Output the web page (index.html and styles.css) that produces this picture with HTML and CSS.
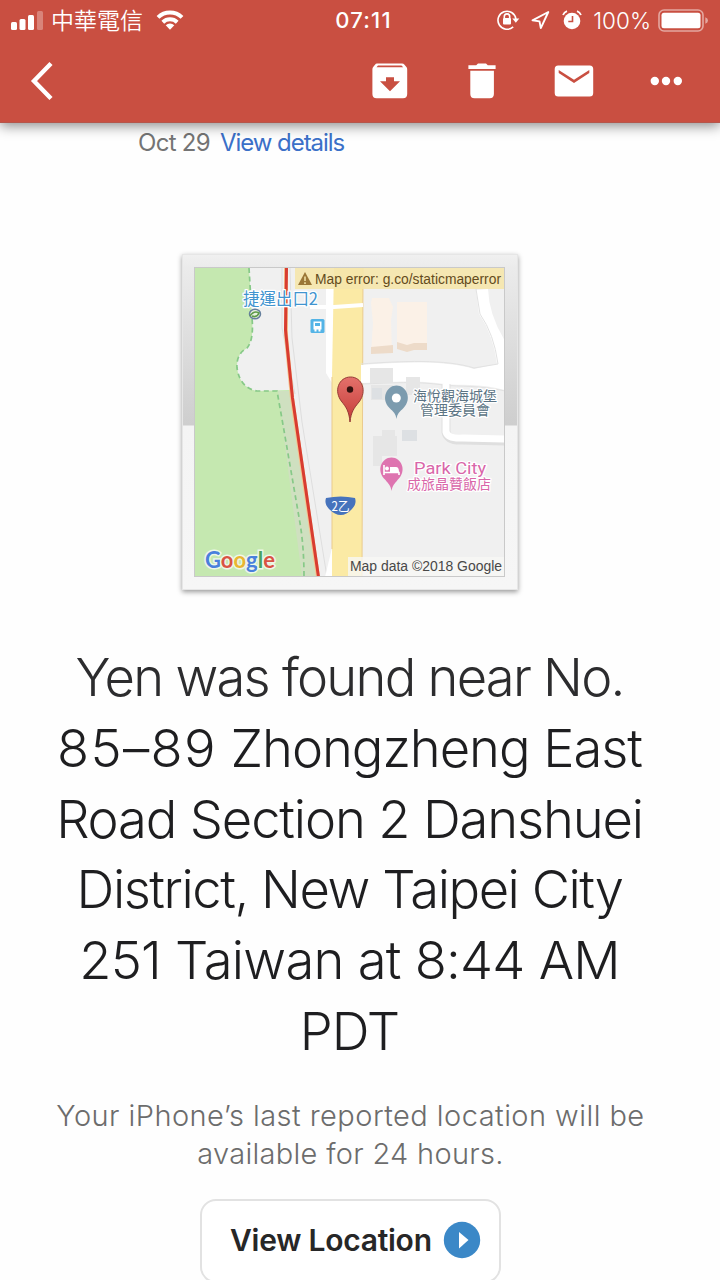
FILE: index.html
```html
<!DOCTYPE html>
<html lang="en">
<head>
    <meta charset="UTF-8">
    <title>Yen was found</title>
    <link rel="stylesheet" href="styles.css">
</head>
<body>
<header class="header">
    <div class="status">
        <div class="status-left">
            <svg class="signal" width="32" height="20" viewBox="0 0 32 20" fill="#fff">
                <rect x="0" y="12" width="6" height="8" rx="1.5"/>
                <rect x="8.5" y="9" width="6" height="11" rx="1.5"/>
                <rect x="17" y="5" width="6" height="15" rx="1.5"/>
                <rect x="26" y="1" width="6" height="19" rx="1.5" opacity=".3"/>
            </svg>
            <span class="carrier" lang="zh-TW">中華電信</span>
            <svg class="wifi" width="28" height="20" viewBox="0 0 28 20" fill="none" stroke="#fff" stroke-width="4">
                <path d="M2 7.4a17.3 17.3 0 0 1 24 0"/>
                <path d="M6.8 12.2a10.5 10.5 0 0 1 14.4 0"/>
                <path d="M14 19.7l-4.3-4.4a6.3 6.3 0 0 1 8.6 0z" fill="#fff" stroke="none"/>
            </svg>
        </div>
        <span class="clock">07:11</span>
        <div class="status-right">
            <svg class="lock" width="23" height="22" viewBox="0 0 23 22" fill="none" stroke="#fff" stroke-width="1.6">
                <path d="M16.2 17.8A9 9 0 1 1 18.9 10"/>
                <path d="M15.3 9.5h7l-3.5 4.2z" fill="#fff" stroke="none"/>
                <path d="M7.3 9.5V7.6a2.7 2.7 0 0 1 5.4 0v1.9"/>
                <rect x="6" y="9" width="8" height="6.4" rx="1" fill="#fff" stroke="none"/>
            </svg>
            <svg class="arrow" width="19" height="20" viewBox="0 0 19 20" fill="none" stroke="#fff" stroke-width="1.9" stroke-linejoin="round">
                <path d="M17.3 2L1.5 10.3l7 1.1 1.3 6.7z"/>
            </svg>
            <svg class="alarm" width="20" height="20" viewBox="0 0 20 20">
                <circle cx="10" cy="11" r="8.3" fill="#fff"/>
                <path d="M1 5a7 7 0 0 1 4-3.8M19 5a7 7 0 0 0-4-3.8" stroke="#fff" stroke-width="1.8" fill="none"/>
                <path d="M10.5 6v5.5H6.3" stroke="#c94f41" stroke-width="1.6" fill="none"/>
            </svg>
            <span class="percent">100%</span>
            <svg class="battery" width="51" height="23" viewBox="0 0 51 23">
                <rect x="1" y="1" width="44" height="21" rx="5" fill="none" stroke="#fff" stroke-width="1.6" opacity=".5"/>
                <rect x="3.5" y="3.7" width="39" height="15.6" rx="2.5" fill="#fff"/>
                <path d="M47.3 8.2q2.7 1 2.7 3.3t-2.7 3.3z" fill="#fff" opacity=".5"/>
            </svg>
        </div>
    </div>
    <nav class="toolbar">
        <svg class="back" width="24" height="40" viewBox="0 0 24 40" fill="none" stroke="#fff" stroke-width="4.4">
            <path d="M22 2.500L5 20L22 37.500"/>
        </svg>
        <div class="actions">
            <svg class="archive" width="36" height="36" viewBox="0 0 36 36">
                <path d="M5 .5h25q1.500 0 2.500 1.200l1.900 2.400q.8 1 .8 2.400V31q0 4.200-4.200 4.200H4.600Q.4 35.200.4 31V6.500q0-1.400.8-2.400L3 1.700Q3.800.5 5 .5z" fill="#fff"/>
                <path d="M6 2.600h23.500l1.700 1.700H4.500zM14 14.300h8v4h6L18 28.200 8 18.300h6z" fill="#c94f41"/>
            </svg>
            <svg class="trash" width="28" height="36" viewBox="0 0 28 36" fill="#fff">
                <path d="M.4 2.300h7.800L10 .5h8l1.800 1.800h7.800V6H.4zM2.300 7.800h23.600V31q0 4.200-4.200 4.200H6.500q-4.200 0-4.200-4.200z"/>
            </svg>
            <svg class="envelope" width="40" height="32" viewBox="0 0 40 32">
                <rect x=".7" y=".6" width="38.500" height="31" rx="3.500" fill="#fff"/>
                <path d="M4.700 5v3l15.300 10 15.300-10V5L20 14.800z" fill="#c94f41"/>
            </svg>
            <svg class="more" width="32" height="10" viewBox="0 0 32 10" fill="#fff">
                <circle cx="4.800" cy="5" r="4.200"/>
                <circle cx="16" cy="5" r="4.200"/>
                <circle cx="27.800" cy="5" r="4.200"/>
            </svg>
        </div>
    </nav>
</header>

<main class="mail">
    <div class="date">Oct 29 <a class="details">View details</a></div>

    <div class="frame">
        <svg class="map" width="309" height="308" viewBox="195 268 309 308">
            <rect x="195" y="268" width="310" height="309" fill="#f0f0f0"/>
            <!-- park -->
            <path d="M195 268h54l3 50q2 22-5 30-11 6-10 20 3 20 20 23l33-1 27 187H195z" fill="#c5e8b0"/>
            <path d="M278 391h11l28 186h-15z" fill="#cfe0c0"/>
            <path d="M249 268l3 50q2 22-5 30-11 6-10 20 3 20 20 23h20l5 28 18 104q4 24 4 54" fill="none" stroke="#86c987" stroke-width="1.700" stroke-dasharray="5 3.500"/>
            <!-- railway -->
            <path d="M282 268v60l13 66M290 268l2 70 10 84 25 155" fill="none" stroke="#dedede"/>
            <path d="M286 268v67l6 63 26 179" fill="none" stroke="#f6c48e" stroke-width="4"/>
            <path d="M286.500 268l-1 62 7 68 26 179" fill="none" stroke="#d83c31" stroke-width="3"/>
            <!-- main road -->
            <path d="M326 268v105l6 10v165l-7 29h37V268z" fill="#fff"/>
            <path d="M334 268h29l-1 309h-30V377z" fill="#fbeaa5"/>
            <path d="M363 268l-1 309M332 377v172" fill="none" stroke="#eacb8e"/>
            <path d="M310 307h24l29-2" fill="none" stroke="#fff" stroke-width="4"/>
            <!-- side streets -->
            <path d="M361 365c40-3 85-5 113 4l23-5q-4-30-18-50l-3-24 12-1q1 26 17 52v49c-25-7-45-4-61-6-30-4-50-2-83-1z" fill="#fff"/>
            <path d="M361 364c40-3 85-5 113 4l24-4q-4-30-18-50l-4-25M361 384c33-1 53-3 83 1 16 2 35 0 61 6" fill="none" stroke="#e2e2e2"/>
            <path d="M446 384v48q2 9 17 8l42 1" fill="none" stroke="#dfdfdf" stroke-width="9"/>
            <path d="M446 384v48q2 7 17 6l42 1" fill="none" stroke="#fff" stroke-width="7"/>
            <!-- buildings -->
            <path d="M372 298h17l4 9-2 13 1 33h-21l2-30-2-20zM397 302h30v48l-30-2z" fill="#fbf1e7"/>
            <path d="M371 347l22-2v8l-22 1zM397 342l10 3 7-2h13v7h-13l-7 2-10-3z" fill="#eddbc9"/>
            <path d="M370 368h23v15h-23zM371 385h22v15h-22zM382 430h13v8h-13zM373 436h24v20h-15v10h-9zM406 377h14v18h-14z" fill="#e6e6e6"/>
            <path d="M402 430h15v11h-15zM372 388h10v11h-10z" fill="#dde0e3"/>
            <!-- station -->
            <text class="halo station" x="243" y="305" font-size="17" textLength="75" lengthAdjust="spacingAndGlyphs" fill="#4194cf">捷運出口2</text>
            <ellipse cx="255" cy="314" rx="5.500" ry="4.800" fill="#e9f1df" stroke="#657f9d" stroke-width="1.500"/>
            <path d="M250 316q4-6 9-3-2 5-7 3" fill="none" stroke="#5d9b49" stroke-width="1.600"/>
            <rect x="310.500" y="319" width="14" height="14" rx="1.500" fill="#54b4e6"/>
            <path d="M313.500 321.500h8v8h-1v2h-2v-2h-2v2h-2v-2h-1z" fill="#fff"/>
            <path d="M315 323h5v3h-5z" fill="#54b4e6"/>
            <!-- main pin -->
            <path d="M350 422c-1-11-4-15-8-20-9-11-3-25 8.500-25s17 14 8.500 25c-5 6-8 10-9 20z" fill="url(#pin)" stroke="#953a36"/>
            <circle cx="350" cy="389.500" r="3.200" fill="#35120f"/>
            <!-- places -->
            <path d="M396.500 419c-1-6-3-7-7-11-9-9-3-22.500 7-22.500s16 13.500 7 22.500c-4 4-6 5-7 11z" fill="#7c9bae"/>
            <circle cx="396.300" cy="398" r="4.500" fill="#fff"/>
            <text class="halo cjk" x="413" y="401" font-size="14" textLength="84" fill="#5c7484">海悅觀海城堡</text>
            <text class="halo cjk" x="420" y="415" font-size="14" textLength="70" fill="#5c7484">管理委員會</text>
            <path d="M391.500 491c-1-6-3-7-6-11-10-9-4-22.500 6-22.500s16 13.500 6 22.500c-3 4-5 5-6 11z" fill="#de74b0"/>
            <path d="M384 465v10M384 472.500h15v2.500" fill="none" stroke="#fff" stroke-width="1.600"/>
            <path d="M390 467h6q3 0 3 5h-9z" fill="#fff"/>
            <circle cx="387" cy="468.500" r="1.900" fill="#fff"/>
            <text class="halo roboto" x="414" y="474" font-size="16" textLength="72" lengthAdjust="spacingAndGlyphs" fill="#d966a9">Park City</text>
            <text class="halo cjk" x="407" y="489" font-size="14" textLength="84" fill="#d966a9">成旅晶贊飯店</text>
            <!-- route shield -->
            <path d="M326 498q15-3 29 0 2 6-3 11-11 12-23 0-5-5-3-11z" fill="#4673bc"/>
            <text class="cjk" x="331.500" y="511" font-size="13" textLength="18" lengthAdjust="spacingAndGlyphs" fill="#fff">2乙</text>
            <!-- captions -->
            <rect x="295" y="268" width="210" height="21" fill="#f5e6ab" opacity=".9"/>
            <path d="M305 272l7 13h-14z" fill="#9b7737"/>
            <path d="M305 276.500v4.500M305 282.300v1.700" stroke="#f5e6ab" stroke-width="1.500"/>
            <text class="arial" x="315" y="284" font-size="14" textLength="186" lengthAdjust="spacingAndGlyphs" fill="#644b1c">Map error: g.co/staticmaperror</text>
            <text class="google" x="205" y="568" font-size="22" textLength="70" lengthAdjust="spacingAndGlyphs"><tspan fill="#4a80dc">G</tspan><tspan fill="#d95343">o</tspan><tspan fill="#e9b632">o</tspan><tspan fill="#4a80dc">g</tspan><tspan fill="#4ba35e">l</tspan><tspan fill="#d95343">e</tspan></text>
            <rect x="348" y="557" width="157" height="20" fill="#f7f7f5" opacity=".8"/>
            <text class="arial" x="350" y="571" font-size="14" textLength="152" lengthAdjust="spacingAndGlyphs" fill="#484848">Map data ©2018 Google</text>
            <defs>
                <linearGradient id="pin" x1="0" y1="0" x2="0" y2="1">
                    <stop offset="0" stop-color="#e4716b"/>
                    <stop offset="1" stop-color="#c53b38"/>
                </linearGradient>
            </defs>
        </svg>
    </div>

    <h1 class="title">
        <span class="l1">Yen was found near No.</span>
        <span class="l2"><b>85–89</b> Zhongzheng East</span>
        <span class="l3">Road Section 2 Danshuei</span>
        <span class="l4">District, New Taipei City</span>
        <span class="l5">251 Taiwan at 8:44 AM</span>
        <span class="l6">PDT</span>
    </h1>
    <p class="note">
        <span class="n1">Your iPhone’s last reported location will be</span>
        <span class="n2">available for 24 hours.</span>
    </p>
    <a class="button">
        <span>View Location</span>
        <svg width="38" height="38" viewBox="0 0 38 38">
            <circle cx="19" cy="19" r="18.200" fill="#3b88c7"/>
            <path d="M16 11l9.500 8-9.500 8.500z" fill="#fff"/>
        </svg>
    </a>
</main>
</body>
</html>
```
FILE: styles.css
```css
* {
    margin: 0;
    padding: 0;
    box-sizing: border-box;
}

body {
    width: 720px;
    height: 1280px;
    overflow: hidden;
    background: #fefefe;
    font-family: Inter, "Liberation Sans", sans-serif;
}

svg {
    display: block;
    flex: none;
}

.header {
    position: relative;
    height: 123px;
    background: #c94f41;
    border-bottom: 1px solid #b5564b;
    box-shadow: 0 3px 12px rgba(0, 0, 0, .45);
    color: #fff;
}

.status {
    display: grid;
    grid-template-columns: 1fr auto 1fr;
    align-items: center;
    height: 40px;
    padding: 0 11px;
}

.status-left, .status-right {
    display: flex;
    align-items: center;
}

.status-right {
    justify-content: flex-end;
}

.carrier {
    margin: 0 13px 0 8px;
    font-family: "Noto Sans CJK TC", sans-serif;
    font-size: 23px;
    line-height: 36px;
    font-weight: 350;
    transform: translateY(-1px);
}

.clock {
    padding-left: 7px;
    font-size: 22px;
    font-weight: 500;
    letter-spacing: 1.2px;
}

.lock {
    margin-right: 11px;
}

.arrow {
    margin-right: 12px;
}

.alarm {
    margin-right: 11px;
}

.percent {
    margin-right: 7px;
    font-size: 22.5px;
    font-weight: 300;
}

.toolbar {
    display: flex;
    justify-content: space-between;
    align-items: center;
    height: 82px;
    padding: 0 38px 0 29px;
}

.actions {
    display: flex;
    align-items: center;
}

.archive {
    margin-right: 60px;
}

.trash {
    margin-right: 58px;
}

.envelope {
    margin-right: 56px;
}

.mail {
    display: flex;
    flex-direction: column;
    align-items: center;
}

.date {
    align-self: flex-start;
    margin: 5px 0 0 138px;
    font-size: 24px;
    line-height: 30px;
    letter-spacing: -.7px;
    color: #747474;
}

.details {
    margin-left: 4px;
    letter-spacing: -1.05px;
    color: #3b70c8;
}

.frame {
    width: 336px;
    height: 336px;
    margin: 96px 20px 0 0;
    padding: 13px 12px;
    border: 1px solid #e6e6e6;
    background: linear-gradient(#f0f0f0 0, #ebebeb 13px, #cecece 170px, #f4f4f4 171px, #f6f6f6);
    box-shadow: 0 2px 5px rgba(0, 0, 0, .4);
}

.map {
    outline: 1px solid #c9c9c9;
}

.halo {
    paint-order: stroke;
    stroke: #fff;
    stroke-width: 2.5px;
    stroke-linejoin: round;
}

.cjk, .station {
    font-family: "Noto Sans CJK TC", sans-serif;
}

.roboto {
    font-family: Roboto, sans-serif;
}

.arial {
    font-family: "Liberation Sans", sans-serif;
}

.google {
    font-family: Lato, sans-serif;
    font-weight: 700;
    paint-order: stroke;
    stroke: #eef7e8;
    stroke-width: 3px;
}

.title {
    margin: 52px 21px 0 0;
    font-size: 52.5px;
    line-height: 70.8px;
    font-weight: 300;
    text-align: center;
    white-space: nowrap;
    color: #1e1e20;
}

.title > span, .note > span {
    display: block;
}

.l1 {
    letter-spacing: -1.75px;
    color: #2c2c2e;
}

.l2 {
    letter-spacing: -1.05px;
}

.l2 b {
    font-weight: 300;
    letter-spacing: 1.3px;
}

.l3 {
    letter-spacing: -1.15px;
}

.l4 {
    letter-spacing: -1.45px;
}

.l5 {
    letter-spacing: -.75px;
}

.l6 {
    letter-spacing: -1px;
}

.note {
    margin: 30px 19px 0 0;
    font-size: 29px;
    line-height: 38.5px;
    font-weight: 300;
    text-align: center;
    white-space: nowrap;
    color: #6c6c6c;
}

.n1 {
    letter-spacing: .45px;
}

.n2 {
    letter-spacing: .3px;
}

.button {
    display: flex;
    justify-content: space-between;
    align-items: center;
    width: 301px;
    height: 84px;
    margin: 25px 19px 0 0;
    padding: 0 18px 2px 28px;
    border: 2px solid #e2e2e2;
    border-radius: 16px;
    background: #fff;
    font-size: 30px;
    font-weight: 600;
    letter-spacing: -.25px;
    white-space: nowrap;
    color: #272727;
}
```
